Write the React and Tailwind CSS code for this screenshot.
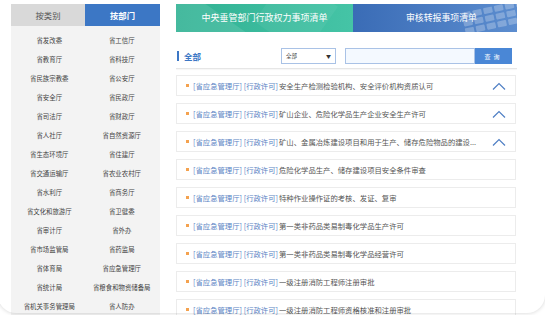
const leftDepts = [
  "省发改委", "省教育厅", "省民族宗教委", "省安全厅", "省司法厅",
  "省人社厅", "省生态环境厅", "省交通运输厅", "省水利厅", "省文化和旅游厅",
  "省审计厅", "省市场监管局", "省体育局", "省统计局", "省机关事务管理局"
]

const rightDepts = [
  "省工信厅", "省科技厅", "省公安厅", "省民政厅", "省财政厅",
  "省自然资源厅", "省住建厅", "省农业农村厅", "省商务厅", "省卫健委",
  "省外办", "省药监局", "省应急管理厅", "省粮食和物资储备局", "省人防办"
]

const items = [
  { text: "安全生产检测检验机构、安全评价机构资质认可", open: true },
  { text: "矿山企业、危险化学品生产企业安全生产许可", open: true },
  { text: "矿山、金属冶炼建设项目和用于生产、储存危险物品的建设...", open: true },
  { text: "危险化学品生产、储存建设项目安全条件审查" },
  { text: "特种作业操作证的考核、发证、复审" },
  { text: "第一类非药品类易制毒化学品生产许可" },
  { text: "第一类非药品类易制毒化学品经营许可" },
  { text: "一级注册消防工程师注册审批" },
  { text: "一级注册消防工程师资格核准和注册审批" }
]

function ChevronUp() {
  return (
    <svg width="14" height="8" viewBox="0 0 14 8" className="shrink-0">
      <path d="M1 7.5 L7 1.5 L13 7.5" fill="none" stroke="#4f7fc4" strokeWidth="1.2" />
    </svg>
  )
}

function DeptPanel() {
  const rows = leftDepts.map((name, i) => [name, rightDepts[i]])

  return (
    <div className="w-[149px] shrink-0 flex flex-col">
      <div className="flex h-[22px]">
        <div className="w-[74px] bg-[#d9d9d9] text-[#555] text-[8.3px] flex items-center justify-center">
          按类别
        </div>
        <div className="flex-1 bg-[#3c77c5] text-white font-bold text-[8.3px] flex items-center justify-center">
          按部门
        </div>
      </div>
      <div className="bg-[#f3f3f3] pt-[5px] pb-[20px] px-[2px] grid grid-cols-2">
        {rows.map(([a, b]) => (
          <div key={a} className="contents">
            <div className="h-[19px] flex items-center justify-center text-[6.4px] text-[#444]">{a}</div>
            <div className="h-[19px] flex items-center justify-center text-[6.4px] text-[#444]">{b}</div>
          </div>
        ))}
      </div>
    </div>
  )
}

function Banner() {
  return (
    <div className="flex h-[28px]">
      <div className="w-[177px] relative overflow-hidden bg-linear-to-r from-[#30b193] to-[#45c4a6] flex items-center justify-center">
        <div className="absolute -left-[20px] top-0 w-[80px] h-[60px] bg-white/10 rotate-[35deg]" />
        <div className="absolute left-[90px] -top-[20px] w-[60px] h-[60px] bg-white/5 rotate-[35deg]" />
        <span className="relative text-white text-[9px]">中央垂管部门行政权力事项清单</span>
      </div>
      <div className="flex-1 relative overflow-hidden bg-linear-to-r from-[#3a6cb6] to-[#5c8dcf] flex items-center justify-end pr-[40px]">
        <div className="absolute right-[-10px] top-[2px] grid grid-cols-6 gap-[2px] rotate-[-12deg] opacity-25">
          {Array.from({ length: 18 }).map((_, i) => (
            <div key={i} className="w-[9px] h-[6px] bg-white rounded-[1px]" />
          ))}
        </div>
        <span className="relative text-white text-[8.9px]">审核转报事项清单</span>
      </div>
    </div>
  )
}

function SearchRow() {
  return (
    <div className="mt-[16px] flex items-center h-[16px] pb-0">
      <div className="w-[2px] h-[10px] bg-[#3c77c5] ml-[1px]" />
      <span className="ml-[5px] text-[8.5px] font-bold text-[#3c77c5]">全部</span>
      <div className="ml-auto w-[55px] h-[16px] border border-[#a9c2e6] bg-white flex items-center px-[4px] text-[5.5px] text-[#333]">
        <span>全部</span>
        <span className="ml-auto text-[5px]">▼</span>
      </div>
      <div className="ml-[9px] w-[130px] h-[16px] border border-[#a9c2e6] bg-[#f4f9ff]" />
      <div className="w-[37px] h-[16px] bg-[#4a87d6] text-white text-[6px] flex items-center justify-center tracking-[3px] mr-[5px]">
        查询
      </div>
    </div>
  )
}

export default function App() {
  return (
    <div className="w-[545px] h-[315px] overflow-hidden bg-white relative font-['Noto_Sans_CJK_SC','Noto_Sans',sans-serif]">
      <div className="absolute left-[-2px] top-[-20px] w-[547px] h-[333px] rounded-[18px] shadow-[0_0_4px_rgba(0,0,0,0.18)] pointer-events-none" />
      <div className="flex pl-[11px] pt-[4px] gap-[16px]">
        <DeptPanel />
        <div className="w-[341px] shrink-0 flex flex-col">
          <Banner />
          <SearchRow />
          <div className="mt-[4px] h-[1px] bg-[#e6e6e6] shadow-[0_1px_1px_rgba(0,0,0,0.04)]" />
          <div className="mt-[6px] flex flex-col gap-[7px] pr-[1px]">
            {items.map((item) => (
              <div
                key={item.text}
                className="h-[21px] border border-[#ececec] bg-white flex items-center pl-[9px] pr-[9px] text-[7.35px] whitespace-nowrap"
              >
                <div className="w-[3px] h-[3px] bg-[#f4a24f] shrink-0" />
                <span className="ml-[4px] text-[#5a83c4]">[省应急管理厅] [行政许可]</span>
                <span className="ml-[1px] text-[#555]">{item.text}</span>
                {item.open && (
                  <div className="ml-auto">
                    <ChevronUp />
                  </div>
                )}
              </div>
            ))}
          </div>
        </div>
      </div>
    </div>
  )
}
